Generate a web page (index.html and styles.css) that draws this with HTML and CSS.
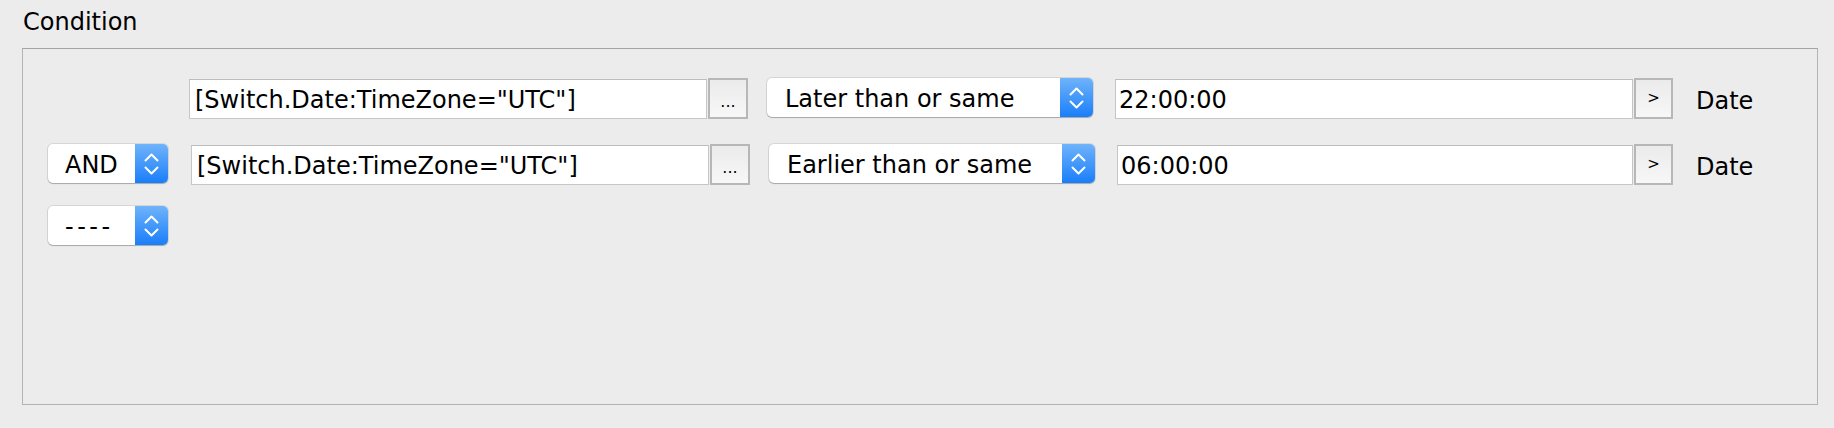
FILE: index.html
```html
<!DOCTYPE html>
<html lang="en">
<head>
<meta charset="utf-8">
<title>Condition</title>
<link rel="stylesheet" href="styles.css">
</head>
<body>
<div class="page">
  <div class="legend">Condition</div>
  <div class="box">
    <div class="rows">
      <div class="row">
        <div class="slot"></div>
        <div class="field field-expr">[Switch.Date:TimeZone="UTC"]</div>
        <div class="btn btn-more">...</div>
        <div class="select select-op">
          <span class="select-label">Later than or same</span>
          <span class="select-arrows"><svg width="33" height="39" viewBox="0 0 33 39"><path d="M10.5 16.5 L16.5 10.5 L22.5 16.5 M10.5 23.5 L16.5 29.5 L22.5 23.5" fill="none" stroke="#fff" stroke-width="2" stroke-linecap="round" stroke-linejoin="round"/></svg></span>
        </div>
        <div class="field field-time">22:00:00</div>
        <div class="btn btn-go">&gt;</div>
        <div class="date-label">Date</div>
      </div>
      <div class="row row-shift">
        <div class="select select-logic">
          <span class="select-label">AND</span>
          <span class="select-arrows"><svg width="33" height="39" viewBox="0 0 33 39"><path d="M10.5 16.5 L16.5 10.5 L22.5 16.5 M10.5 23.5 L16.5 29.5 L22.5 23.5" fill="none" stroke="#fff" stroke-width="2" stroke-linecap="round" stroke-linejoin="round"/></svg></span>
        </div>
        <div class="field field-expr">[Switch.Date:TimeZone="UTC"]</div>
        <div class="btn btn-more">...</div>
        <div class="select select-op">
          <span class="select-label">Earlier than or same</span>
          <span class="select-arrows"><svg width="33" height="39" viewBox="0 0 33 39"><path d="M10.5 16.5 L16.5 10.5 L22.5 16.5 M10.5 23.5 L16.5 29.5 L22.5 23.5" fill="none" stroke="#fff" stroke-width="2" stroke-linecap="round" stroke-linejoin="round"/></svg></span>
        </div>
        <div class="field field-time">06:00:00</div>
        <div class="btn btn-go">&gt;</div>
        <div class="date-label">Date</div>
      </div>
      <div class="row">
        <div class="select select-logic">
          <span class="select-label select-dashes">----</span>
          <span class="select-arrows"><svg width="33" height="39" viewBox="0 0 33 39"><path d="M10.5 16.5 L16.5 10.5 L22.5 16.5 M10.5 23.5 L16.5 29.5 L22.5 23.5" fill="none" stroke="#fff" stroke-width="2" stroke-linecap="round" stroke-linejoin="round"/></svg></span>
        </div>
      </div>
    </div>
  </div>
</div>
</body>
</html>
```
FILE: styles.css
```css
html, body {
  margin: 0;
  padding: 0;
  background: #ececec;
}

body {
  font-family: "DejaVu Sans", "Noto Sans", sans-serif;
  font-size: 24px;
  color: #000;
}

.page {
  padding: 8px 16px 0 22px;
}

.legend {
  padding-left: 1px;
  height: 28px;
  line-height: 28px;
  margin-bottom: 12px;
}

.box {
  box-sizing: border-box;
  height: 357px;
  border: 1px solid #b3b3b3;
  border-top-color: #a3a3a3;
  padding: 29px 25px 0 25px;
}

.rows {
  display: grid;
  grid-template-rows: 66px 62px auto;
}

.row {
  display: flex;
  align-items: flex-start;
}

.slot {
  width: 120px;
  flex: none;
}

.field {
  box-sizing: border-box;
  height: 40px;
  margin-top: 1px;
  background: #fff;
  border: 1px solid #c6c6c6;
  border-top-color: #bdbdbd;
  line-height: 35px;
  padding: 3px 5px 0;
  white-space: nowrap;
  overflow: hidden;
}

.field-expr {
  width: 518px;
  flex: none;
  margin-left: 21px;
}

.row-shift .field-expr {
  margin-left: 23px;
}

.field-time {
  flex: 1;
  margin-left: 22px;
  padding-left: 3px;
}

.btn {
  box-sizing: border-box;
  height: 41px;
  flex: none;
  margin-left: 1px;
  border: 2px solid #b7b7b7;
  background: linear-gradient(#ebebeb, #f7f7f7);
  text-align: center;
  font-size: 16px;
}

.btn-more {
  width: 40px;
  padding-top: 6px;
  line-height: 31px;
}

.btn-go {
  width: 39px;
  font-size: 15px;
  line-height: 37px;
}

.select {
  box-sizing: border-box;
  height: 39px;
  flex: none;
  display: flex;
  background: #fff;
  border-radius: 5px;
  box-shadow: 0 0 0 1px rgba(0, 0, 0, 0.09), 0 1px 1px rgba(0, 0, 0, 0.22);
  overflow: hidden;
}

.select-label {
  flex: 1;
  padding-left: 18px;
  padding-top: 4px;
  line-height: 35px;
  white-space: nowrap;
}

.select-arrows {
  width: 33px;
  height: 39px;
  flex: none;
  background: linear-gradient(#6fb3fb, #1a7ef9);
}

.select-arrows svg {
  display: block;
}

.select-op {
  width: 326px;
  margin-left: 19px;
}

.select-logic {
  width: 120px;
}

.select-logic .select-label {
  padding-left: 17px;
}

.select-dashes {
  letter-spacing: 3.5px;
}

.date-label {
  width: 96px;
  flex: none;
  margin-left: 23px;
  padding-top: 5px;
  line-height: 36px;
}
```
